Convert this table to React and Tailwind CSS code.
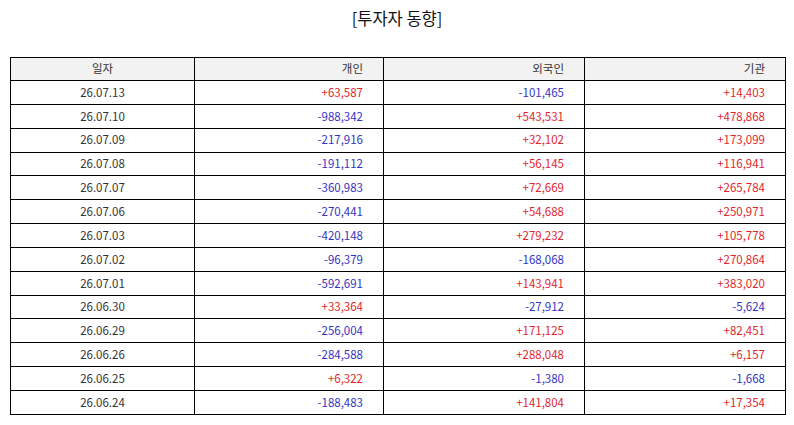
import React from 'react'

const rows = [
  ['26.07.13', '+63,587', '-101,465', '+14,403'],
  ['26.07.10', '-988,342', '+543,531', '+478,868'],
  ['26.07.09', '-217,916', '+32,102', '+173,099'],
  ['26.07.08', '-191,112', '+56,145', '+116,941'],
  ['26.07.07', '-360,983', '+72,669', '+265,784'],
  ['26.07.06', '-270,441', '+54,688', '+250,971'],
  ['26.07.03', '-420,148', '+279,232', '+105,778'],
  ['26.07.02', '-96,379', '-168,068', '+270,864'],
  ['26.07.01', '-592,691', '+143,941', '+383,020'],
  ['26.06.30', '+33,364', '-27,912', '-5,624'],
  ['26.06.29', '-256,004', '+171,125', '+82,451'],
  ['26.06.26', '-284,588', '+288,048', '+6,157'],
  ['26.06.25', '+6,322', '-1,380', '-1,668'],
  ['26.06.24', '-188,483', '+141,804', '+17,354'],
]

const Num = ({ v }) => (
  <td
    className={
      'border border-black text-right pr-[20px] ' +
      (v.startsWith('-') ? 'text-[#3434c4]' : 'text-[#e3262d]')
    }
  >
    {v}
  </td>
)

const App = () => {
  return (
    <div
      className="w-[794px] h-[425px] bg-white"
      style={{ fontFamily: '"Noto Sans CJK KR", "Noto Sans", sans-serif' }}
    >
      <h1 className="text-center text-[16.5px] leading-[20px] pt-[8px] text-[#111]">[투자자 동향]</h1>

      <table className="ml-[10px] mt-[29px] w-[775px] border-collapse text-[11.5px] text-[#333] table-fixed">
        <colgroup>
          <col className="w-[184px]" />
          <col className="w-[189px]" />
          <col className="w-[201px]" />
          <col className="w-[201px]" />
        </colgroup>
        <thead>
          <tr className="h-[23px] bg-[#f2f2f2]">
            <th className="border border-black font-normal text-center">일자</th>
            <th className="border border-black font-normal text-right pr-[20px]">개인</th>
            <th className="border border-black font-normal text-right pr-[20px]">외국인</th>
            <th className="border border-black font-normal text-right pr-[20px]">기관</th>
          </tr>
        </thead>
        <tbody>
          {rows.map((r) => (
            <tr key={r[0]} className="h-[23.85px]">
              <td className="border border-black text-center">{r[0]}</td>
              <Num v={r[1]} />
              <Num v={r[2]} />
              <Num v={r[3]} />
            </tr>
          ))}
        </tbody>
      </table>
    </div>
  )
}

export default App
